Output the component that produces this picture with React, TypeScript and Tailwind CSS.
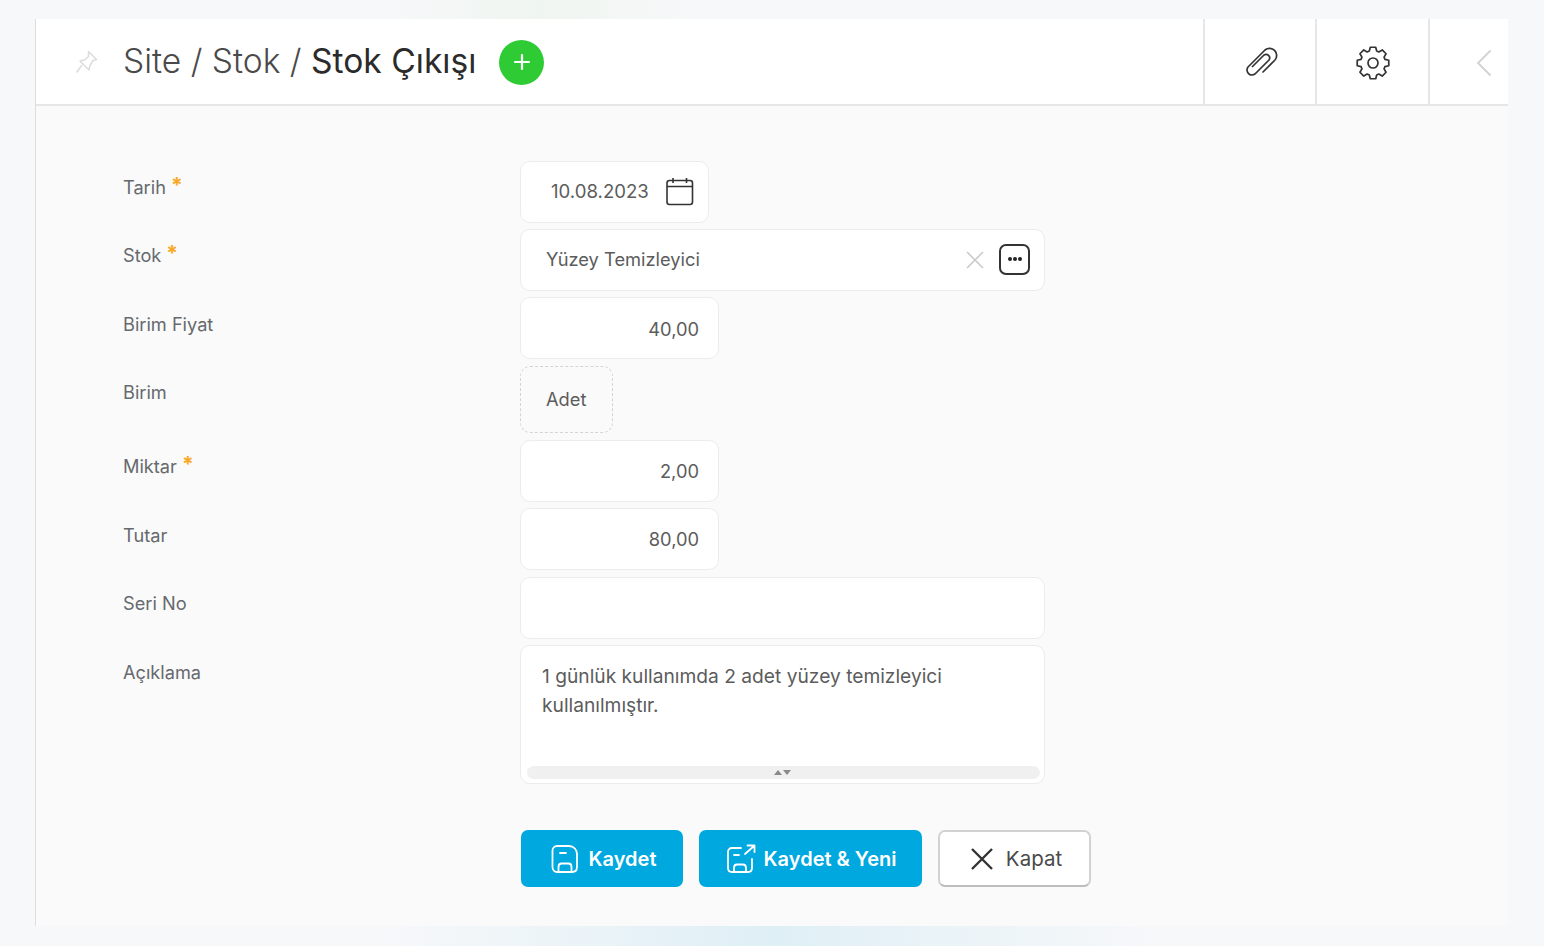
import React from 'react';

const CalendarIcon = () => (
  <svg width="30" height="30" viewBox="0 0 30 30" fill="none" stroke="#333" strokeWidth="1.6">
    <rect x="2" y="4.5" width="25.5" height="24" rx="2.5" />
    <path d="M2 10.5h25.5M8 2v5M21.500 2v5" />
  </svg>
);

const SaveIcon = () => (
  <svg width="28" height="30" viewBox="0 0 28 30" fill="none" stroke="white" strokeWidth="1.8" strokeLinecap="round" strokeLinejoin="round">
    <path d="M6 2h12c5 0 8 4 8 8v13c0 3-2 5-5 5H6c-2.500 0-4.500-2-4.500-5V6.500C1.500 4 3.500 2 6 2z" />
    <path d="M9 9h6M7.500 28v-5c0-2 1-3.500 3-3.500h7c2 0 3 1.500 3 3.500v5" />
  </svg>
);

const SaveNewIcon = () => (
  <svg width="30" height="30" viewBox="0 0 30 30" fill="none" stroke="white" strokeWidth="1.8" strokeLinecap="round" strokeLinejoin="round">
    <path d="M15 4H6C3.500 4 2 5.500 2 8v16c0 2.500 1.500 4 4 4h16c2.500 0 4-1.500 4-4v-9" />
    <path d="M8 11h5M8 28v-4c0-2 1-3.500 3-3.500h6c2 0 3 1.500 3 3.500v4M19 10l9-8M21.500 1.500H28.500V8" />
  </svg>
);

// 8 tooth cog outline, rounded by the stroke joins
function cogPath(cx: number, cy: number, inner: number, outer: number) {
  const pts: string[] = [];
  for (let i = 0; i < 8; i++) {
    const a = (i * Math.PI) / 4 - Math.PI / 2;
    const at = (r: number, d: number) => `${(cx + r * Math.cos(a + d)).toFixed(2)} ${(cy + r * Math.sin(a + d)).toFixed(2)}`;
    pts.push(at(inner, -0.3), at(outer, -0.17), at(outer, 0.17), at(inner, 0.3));
  }
  return `M${pts.join('L')}Z`;
}

const boxClass = 'h-[62px] bg-white border border-[#ececec] rounded-[10px] flex items-center text-[18.3px] text-[#5c5c5c]';

function Label({ text, required, low }: { text: string; required?: boolean; low?: boolean }) {
  return (
    <div className={low ? 'text-[18.2px] leading-[28px] text-[#66696d] pt-[13px]' : 'text-[18.2px] leading-[28px] text-[#66696d] pt-[12px]'}>
      {text}
      {required && <span className="ml-[5px] text-[#f9a825] text-[21px] font-bold leading-none relative -top-[1px]">*</span>}
    </div>
  );
}

export default function App() {
  return (
    <div className="w-[1544px] h-[946px] overflow-hidden bg-[#f7f8fa] pt-[19px] pl-[35px] relative" style={{ fontFamily: 'Inter, sans-serif' }}>
      {/* faint glows behind the panel */}
      <div className="absolute top-0 left-[380px] w-[320px] h-[19px] bg-gradient-to-r from-transparent via-[#eff5f0] to-transparent" />
      <div className="absolute bottom-0 left-[380px] w-[780px] h-[20px] bg-gradient-to-r from-transparent via-[#dfeff6] to-transparent" />

      <div className="relative w-[1473px] h-[907px] border-l border-[#dedede] bg-[#fafafa]">
        {/* Header */}
        <div className="h-[87px] bg-white border-b-2 border-[#e6e6e6] flex items-center">
          <svg className="ml-[39px] mt-[1px]" width="24" height="26" viewBox="0 0 24 26" fill="none" stroke="#dcdcdc" strokeWidth="1.500" strokeLinejoin="round">
            <path d="M13.500 2.500l8 8-3.500 1-3 5-1 4.500-9-9 4.500-1 4-3.500z" />
            <path d="M7 16l-5.500 7.500" />
          </svg>
          <div className="ml-[24px] mb-[1px] text-[33.6px] leading-none font-light text-[#4a4a4a] whitespace-nowrap">
            Site / Stok / <span className="font-normal text-[#2b2b2b]">Stok Çıkışı</span>
          </div>
          <button className="ml-[23px] mt-[1px] w-[45px] h-[45px] rounded-full bg-[#2fcb35] flex items-center justify-center">
            <svg width="18" height="18" viewBox="0 0 18 18" stroke="white" strokeWidth="2.200" strokeLinecap="round">
              <path d="M9 2v14M2 9h14" />
            </svg>
          </button>
          <div className="ml-auto flex h-full">
            <div className="w-[112px] h-full border-l-2 border-[#e6e6e6] flex items-center justify-center pl-[1px] pt-[5px]">
              <svg width="36" height="36" viewBox="0 0 36 36" fill="none" stroke="#333" strokeWidth="1.700" strokeLinecap="round" strokeLinejoin="round">
                <path d="M20 26L32 14A7.100 7.100 0 0 0 22 4L5 21A5 5 0 0 0 13 27L26 14A3.600 3.600 0 0 0 21 9L9.500 20.500" />
              </svg>
            </div>
            <div className="w-[113px] h-full border-l-2 border-[#e6e6e6] flex items-center justify-center pt-[2px]">
              <svg width="36" height="36" viewBox="0 0 36 36" fill="none" stroke="#333" strokeWidth="1.700" strokeLinejoin="round">
                <path d={cogPath(18, 18, 12.5, 16)} />
                <circle cx="18" cy="18" r="5" />
              </svg>
            </div>
            <div className="w-[80px] h-full border-l-2 border-[#e6e6e6] flex items-center pl-[46px] pt-[2px]">
              <svg width="16" height="28" viewBox="0 0 16 28" fill="none" stroke="#d2d2d2" strokeWidth="1.800" strokeLinecap="round">
                <path d="M14 2L2 14l12 12" />
              </svg>
            </div>
          </div>
        </div>

        {/* Form */}
        <div className="pl-[87px] pt-[55px] grid grid-cols-[397px_525px] auto-rows-auto">
          <Label text="Tarih" required />
          <div className={`${boxClass} w-[189px] pl-[30px]`}>
            <span className="text-[18.6px]">10.08.2023</span>
            <span className="ml-[16px] mb-[3px] flex"><CalendarIcon /></span>
          </div>

          <div className="col-span-2 h-[6px]" />
          <Label text="Stok" required />
          <div className={`${boxClass} w-[525px] pl-[25px] pr-[14px] pb-[1px]`}>
            <span>Yüzey Temizleyici</span>
            <svg className="ml-auto" width="20" height="20" viewBox="0 0 20 20" stroke="#c8c8c8" strokeWidth="1.500">
              <path d="M2 2l16 16M18 2L2 18" />
            </svg>
            <div className="ml-[14px] w-[31px] h-[31px] border-2 border-[#333] rounded-[7px] flex items-center justify-center gap-[1px] pb-[2px]">
              <span className="w-[4px] h-[4px] rounded-full bg-[#222]" />
              <span className="w-[4px] h-[4px] rounded-full bg-[#222]" />
              <span className="w-[4px] h-[4px] rounded-full bg-[#222]" />
            </div>
          </div>

          <div className="col-span-2 h-[6px]" />
          <Label text="Birim Fiyat" low />
          <div className={`${boxClass} w-[199px] justify-end pr-[19px] pt-[4px]`}>40,00</div>

          <div className="col-span-2 h-[7px]" />
          <Label text="Birim" />
          <div className="h-[67px] w-[93px] border border-dashed border-[#d4d4d4] rounded-[10px] flex items-center pl-[25px] text-[18.3px] text-[#5c5c5c]">Adet</div>

          <div className="col-span-2 h-[7px]" />
          <Label text="Miktar" required />
          <div className={`${boxClass} w-[199px] justify-end pr-[19px] pt-[2px]`}>2,00</div>

          <div className="col-span-2 h-[6px]" />
          <Label text="Tutar" low />
          <div className={`${boxClass} w-[199px] justify-end pr-[19px] pt-[2px]`}>80,00</div>

          <div className="col-span-2 h-[7px]" />
          <Label text="Seri No" />
          <div className={`${boxClass} w-[525px]`} />

          <div className="col-span-2 h-[6px]" />
          <Label text="Açıklama" low />
          <div className="h-[139px] w-[525px] bg-white border border-[#ececec] rounded-[10px] flex flex-col">
            <div className="flex-1 pl-[21px] pr-[60px] pt-[16px] text-[19.2px] leading-[29px] text-[#5c5c5c]">
              1 günlük kullanımda 2 adet yüzey temizleyici kullanılmıştır.
            </div>
            <div className="ml-[6px] mr-[4px] mb-[4px] h-[13px] pr-[2px] bg-[#f0f0f0] rounded-full flex items-center justify-center gap-[1px]">
              <span className="w-0 h-0 border-x-[4px] border-x-transparent border-b-[5px] border-b-[#8a8a8a]" />
              <span className="w-0 h-0 border-x-[4px] border-x-transparent border-t-[5px] border-t-[#8a8a8a]" />
            </div>
          </div>

          {/* Actions */}
          <div className="col-start-2 w-[600px] mt-[46px] flex gap-[16px] pl-[1px]">
            <button className="h-[57px] w-[162px] bg-[#00a8e0] rounded-[7px] flex items-center justify-center gap-[10px] pl-[3px] text-white text-[20px] font-semibold">
              <SaveIcon />
              Kaydet
            </button>
            <button className="h-[57px] w-[223px] bg-[#00a8e0] rounded-[7px] flex items-center justify-center gap-[8px] pl-[1px] text-white text-[20px] font-semibold">
              <SaveNewIcon />
              Kaydet &amp; Yeni
            </button>
            <button className="h-[57px] w-[153px] bg-white border-2 border-[#d2d2d2] border-b-[#bdbdbd] rounded-[7px] flex items-center justify-center gap-[11px] pl-[2px] text-[20.500px] text-[#4a4a4a]">
              <svg width="26" height="26" viewBox="0 0 26 26" stroke="#333" strokeWidth="2.400">
                <path d="M3 3l20 20M23 3L3 23" />
              </svg>
              <span className="pt-[2px]">Kapat</span>
            </button>
          </div>
        </div>
      </div>
    </div>
  );
}
